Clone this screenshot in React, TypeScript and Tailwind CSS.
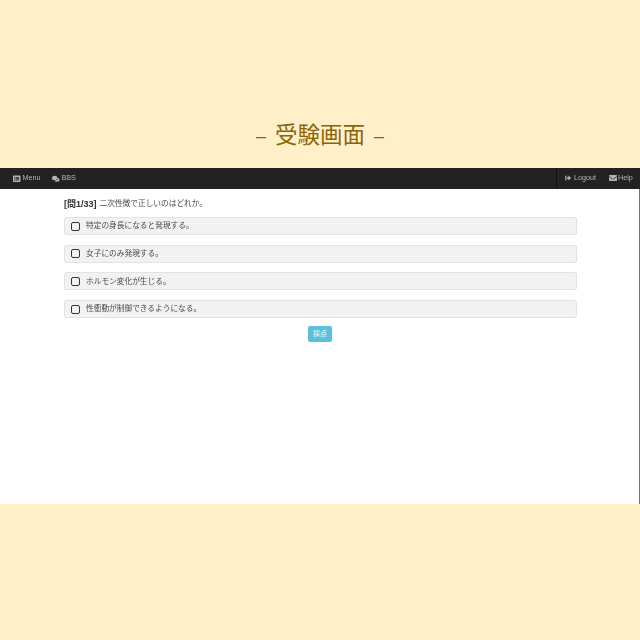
import React from 'react';
import { FaComments, FaEnvelope, FaListAlt, FaSignOutAlt } from 'react-icons/fa';

const options = [
  '特定の身長になると発現する。',
  '女子にのみ発現する。',
  'ホルモン変化が生じる。',
  '性衝動が制御できるようになる。',
];

export default function App() {
  return (
    <div className="h-[640px] w-[640px] overflow-hidden bg-[#fff0c9] font-['Liberation_Sans','Noto_Sans_CJK_JP',sans-serif] text-[7.7px] text-[#4a4a4a]">
      {/* Title */}
      <div className="flex h-[168px] items-end justify-center pb-[19px]">
        <h1 className="flex items-center gap-[8px] text-[22.5px] leading-[26px] text-[#8a6508]">
          <span className="mr-[1px] text-[18px]">–</span>
          <span>受験画面</span>
          <span className="ml-[1px] text-[18px]">–</span>
        </h1>
      </div>

      {/* Navbar */}
      <nav className="flex h-[21px] items-center justify-between bg-[#222] text-[7.2px] text-[#b5b5b5]">
        <div className="flex items-center gap-[12px] pl-[13px] will-change-transform">
          <span className="flex items-center gap-[2px]">
            <FaListAlt className="h-[7.5px] w-[7.5px]" /> Menu
          </span>
          <span className="flex items-center gap-[1.5px]">
            <FaComments className="h-[7.5px] w-[7.5px]" /> BBS
          </span>
        </div>
        <div className="flex h-full items-center gap-[13px] border-l border-[#111] pl-[8px] pr-[7px] will-change-transform">
          <span className="flex items-center gap-[3px]">
            <FaSignOutAlt className="h-[6px] w-[6px]" /> Logout
          </span>
          <span className="flex items-center gap-[1px]">
            <FaEnvelope className="h-[8px] w-[8px]" /> Help
          </span>
        </div>
      </nav>

      {/* Question */}
      <main className="h-[315px] border-r border-[#777] bg-white px-[64px] pt-[10px]">
        <p className="mb-[8px] flex h-[10px] w-[512px] items-center gap-[3px] leading-[10px] will-change-transform">
          <b className="text-[9px] text-[#333]">[問1/33]</b> 二次性徴で正しいのはどれか。
        </p>
        <div className="flex w-[513px] flex-col gap-[9.7px] will-change-transform">
          {options.map((text) => (
            <label
              key={text}
              className="flex h-[18px] items-center gap-[6px] rounded-[2px] border border-[#e3e3e3] bg-[#f2f2f2] pl-[6px]"
            >
              <span className="h-[9px] w-[9px] rounded-[2px] border-[1.5px] border-[#333]" />
              {text}
            </label>
          ))}
        </div>
        <div className="mt-[8px] flex w-[512px] justify-center">
          <button className="h-[16px] w-[24px] rounded-[2px] bg-[#5bc0de] text-[7px] text-white">
            採点
          </button>
        </div>
      </main>
    </div>
  );
}
